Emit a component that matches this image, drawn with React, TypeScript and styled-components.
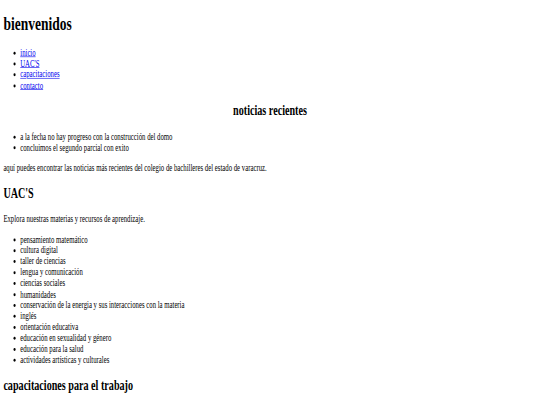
import * as React from "react"
import styled, { createGlobalStyle } from "styled-components"

const Global = createGlobalStyle`
  html, body {
    margin: 0;
    padding: 0;
    overflow: hidden;
    background: #ffffff;
  }
`

// the page is drawn at 1280px wide and shrunk to fit the small window
const Viewport = styled.div`
  width: 1280px;
  transform: scale(0.421875, 0.595);
  transform-origin: top left;
`

const Page = styled.div`
  padding: 0 8px;
  font-family: "Liberation Serif", "Times New Roman", serif;
  font-size: 16px;
  line-height: 1.15;
  color: #000;
  display: flow-root;
`

const Title = styled.h1`
  font-size: 32px;
  font-weight: bold;
  margin: 21.44px 0;
`

const Heading = styled.h2<{ $center?: boolean }>`
  font-size: 24px;
  font-weight: bold;
  margin: 19.92px 0;
  text-align: ${(p) => (p.$center ? "center" : "left")};
`

const List = styled.ul`
  margin: 16px 0;
  padding-left: 40px;
  list-style: disc;
`

const NavLink = styled.a`
  color: #0000ee;
  text-decoration: underline;
`

const Text = styled.p`
  margin: 16px 0;
`

const nav = ["inicio", "UAC'S", "capacitaciones", "contacto"]

const news = [
  "a la fecha no hay progreso con la construcción del domo",
  "concluimos el segundo parcial con exito",
]

const uacs = [
  "pensamiento matemático",
  "cultura digital",
  "taller de ciencias",
  "lengua y comunicación",
  "ciencias sociales",
  "humanidades",
  "conservación de la energia y sus interacciones con la materia",
  "inglés",
  "orientación educativa",
  "educación en sexualidad y género",
  "educación para la salud",
  "actividades artísticas y culturales",
]

export default function App() {
  return (
    <Viewport>
      <Global />
      <Page>
        <Title>bienvenidos</Title>
        <List>
          {nav.map((n) => (
            <li key={n}>
              <NavLink href="#">{n}</NavLink>
            </li>
          ))}
        </List>

        <Heading $center>noticias recientes</Heading>
        <List>
          {news.map((n) => (
            <li key={n}>{n}</li>
          ))}
        </List>
        <Text>aquí puedes encontrar las noticias más recientes del colegio de bachilleres del estado de varacruz.</Text>

        <Heading>UAC'S</Heading>
        <Text>Explora nuestras materias y recursos de aprendizaje.</Text>
        <List>
          {uacs.map((u) => (
            <li key={u}>{u}</li>
          ))}
        </List>

        <Heading>capacitaciones para el trabajo</Heading>
      </Page>
    </Viewport>
  )
}
